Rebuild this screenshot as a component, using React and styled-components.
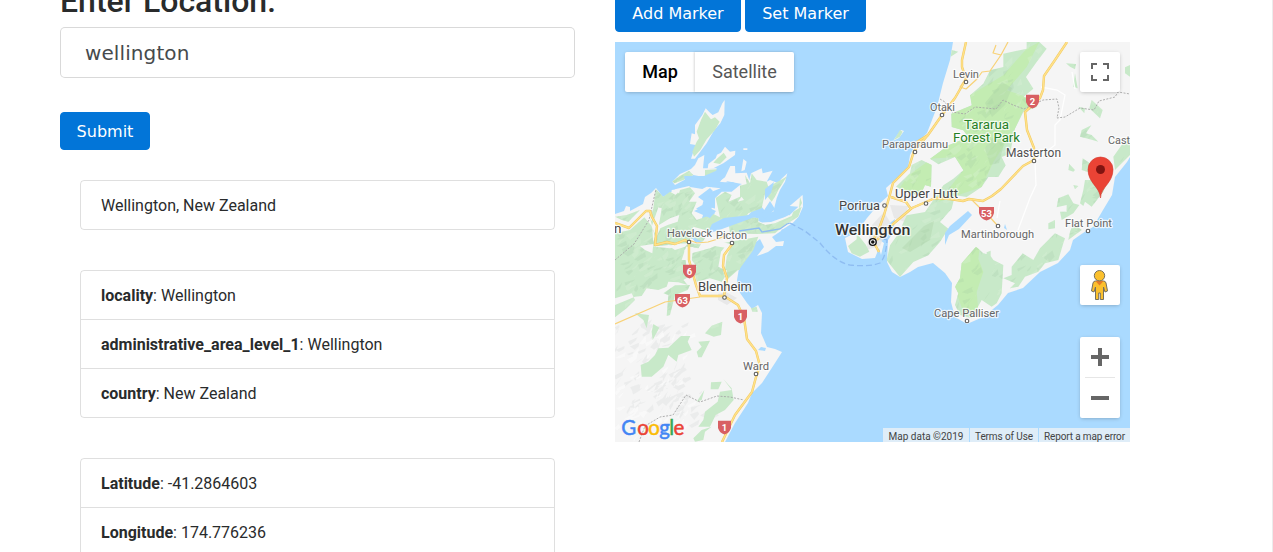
import React from "react";
import styled, { createGlobalStyle } from "styled-components";

const GlobalStyle = createGlobalStyle`
  *, *::before, *::after { box-sizing: border-box; }
  html, body { margin: 0; height: 100%; overflow: hidden; background: #fff; }
  body { font-family: Roboto, "Liberation Sans", sans-serif; font-size: 16px; line-height: 1.5; color: #292b2c; }
`;

const Page = styled.main`
  height: 552px;
  overflow: hidden;
  display: flex;
  gap: 40px;
  padding-left: 60px;
  border-right: 1px solid #ececec;
`;
const Column = styled.section`
  width: 515px;
  flex: none;
`;
const Heading = styled.h2`
  margin: -16px 0 8px;
  font-size: 32px;
  font-weight: 500;
  line-height: 35px;
`;
const Input = styled.input`
  display: block;
  width: 100%;
  height: 51px;
  padding: 12px 24px;
  border: 1px solid rgba(0, 0, 0, 0.15);
  border-radius: 5px;
  outline: 0;
  background: #fff;
  color: #464a4c;
  font: 20px "DejaVu Sans", sans-serif;
  letter-spacing: 0.1px;
`;
const Button = styled.button`
  width: ${(p) => p.$width}px;
  height: 38px;
  padding: 9px 0 7px;
  border: 1px solid #0275d8;
  border-radius: 4px;
  background: #0275d8;
  color: #fff;
  font: 16px/20px "DejaVu Sans", sans-serif;
  white-space: nowrap;
`;
const SubmitRow = styled.div`
  display: flex;
  margin: 34px 0 30px;
`;
const MarkerRow = styled.div`
  display: flex;
  gap: 4px;
  margin: -6px 0 10px;
`;
const Results = styled.div`
  display: flex;
  flex-direction: column;
  gap: 40px;
  padding: 0 20px;
`;
const List = styled.ul`
  margin: 0;
  padding: 0;
  list-style: none;
  border: 1px solid rgba(0, 0, 0, 0.125);
  border-radius: 4px;
`;
const Item = styled.li`
  padding: 13px 20px 11px;
  & + & { border-top: 1px solid rgba(0, 0, 0, 0.125); }
`;
const MapBox = styled.div`
  position: relative;
  width: 515px;
  height: 400px;
  overflow: hidden;
  background: #aadaff;
`;
const MapSvg = styled.svg`
  display: block;
  text { font-family: Roboto, "Liberation Sans", sans-serif; }
`;
const Logo = styled.g`
  && text { font-family: Lato, sans-serif; font-size: 20.5px; }
`;
const Control = styled.div`
  position: absolute;
  right: 10px;
  top: ${(p) => p.$top}px;
  width: 40px;
  height: ${(p) => p.$height || 40}px;
  background: #fff;
  border-radius: 2px;
  box-shadow: 0 1px 4px -1px rgba(0, 0, 0, 0.3);
  svg { display: block; }
`;
const TypeBar = styled.div`
  position: absolute;
  left: 10px;
  top: 10px;
  display: flex;
  height: 40px;
  background: #fff;
  border-radius: 2px;
  box-shadow: 0 1px 4px -1px rgba(0, 0, 0, 0.3);
`;
const TypeTab = styled.div`
  width: ${(p) => p.$width}px;
  text-align: center;
  font-size: 18px;
  line-height: 40px;
  color: ${(p) => (p.$active ? "#000" : "#565656")};
  font-weight: ${(p) => (p.$active ? 500 : 400)};
  & + & { box-shadow: -1px 0 2px rgba(0, 0, 0, 0.15); }
`;
const Legal = styled.div`
  position: absolute;
  right: 0;
  bottom: 0;
  display: flex;
  gap: 1px;
  height: 14px;
`;
const LegalCell = styled.span`
  width: ${(p) => p.$width}px;
  text-align: center;
  white-space: nowrap;
  background: rgba(245, 245, 245, 0.7);
  color: #444;
  font-size: 10px;
  letter-spacing: ${(p) => p.$tracking || 0}px;
  line-height: 17px;
`;

const LAND = [
  "M615 214L624 211L626 206L630 207V211L643 204L645 197L651 193L656 188L663 197L676 189L689 186L700 194L712 187L704 200L694 208L704 212L702 218L712 226L712 232L742 229L755 223L771 222L785 217L789 215L793 221L784 223L781 231L772 237L776 242L784 241L783 246L776 246L768 252L757 256L764 247L760 239L752 245L745 260L739 268L737 280L738 290L747 303L752 309L758 305L762 313L761 333L767 347L775 349L782 352L775 363L762 383L752 393L748 403L735 423L725 442H615Z",
  "M953 42L950 60L943 83L937 107L927 133L915 145L910 155L908 168L895 180L886 188L888 196L878 205L867 218L857 232L845 238L848 252L862 259L875 258L879 248L881 255L884 243L877 238L886 226L895 219L893 233L888 240L887 262L892 272L900 277L910 272L918 267L933 263L945 273L952 283L951 302L955 317L967 324L983 317L998 305L1008 293L1023 288L1040 272L1058 263L1070 250L1073 240L1083 233L1093 227L1103 210L1112 195L1115 177L1127 162L1130 157V42Z",
];
const CROP_A = [
  "M329 30L328 75L316 100L298 120L275 160L240 206H228L242 165L225 162L230 130L240 133V105L262 75L272 55L285 68L293 75L310 67L322 40Z",
  "M330 170L345 185L361 182L360 195L325 220L295 235L278 237L280 222L302 205L306 194L318 188Z",
  "M268 195L264 235L305 235L300 250L270 262L235 255L180 285L172 275L195 252L228 237L240 225L250 205Z",
  "M385 175H397V180H385ZM385 207L395 215L389 240L379 244ZM346 228L360 228L361 250L395 248L403 270L408 250L440 235L443 250L473 242L455 275L465 270L490 280L498 268L517 250L510 275L495 300L485 325L475 365L455 370L440 350L420 355L400 375L372 378L385 390L350 408L290 398L285 380L300 370L300 325L320 305L350 305L375 285L352 276L330 277L312 275L330 262Z",
  "M230 292L262 297L275 290L317 295L290 305L270 315L262 345L245 355L235 372L210 362L170 330L170 300ZM278 267L297 262L290 270Z",
  "M563 315L564 350L551 380L534 398L505 417L460 430L425 430L365 440L290 425L275 400L300 400L310 406L350 400L400 380L430 385L430 392L453 405L480 395L522 377L550 350L524 348Z",
];
const GREEN_A = [
  "M270 65L280 78L288 88L300 82L314 95L300 120L275 148L256 180L237 200L232 185L245 155L252 145L245 125L258 90Z",
  "M326 188L335 202L315 222L295 218L306 206ZM222 242L235 255L205 270L178 280L172 274L195 258ZM270 240L305 238L302 250L270 262Z",
  "M122 297L145 320L165 305L182 315L195 300L225 292L240 310L222 335L245 335L230 370L245 390L295 372L315 382L302 324L330 305L350 315L340 335L375 320L375 287L395 282L390 255L405 280L410 250L425 270L455 275L460 290L515 260L490 300L480 320L470 335L450 310L440 355L400 370L380 400L350 405L290 425L235 410L230 430L270 445L250 475L222 470L160 465L110 470L120 440L105 385L115 355Z",
  "M0 430L45 420L88 382L112 410L115 470L165 475L215 465L200 510L200 540H0ZM0 380L35 375L75 360L40 395L20 390Z",
  "M320 460L430 440L415 480L375 535V540H230V490L285 475Z",
  "M342 408L400 380L430 385L430 396L451 405L480 400L530 378L535 365L560 350L550 380L510 405L480 430L425 432L345 430Z",
];
const GREEN_B = [
  "M0 0H218L225 48L205 60L218 75L190 67L160 65L155 80L130 90L95 85L80 108L60 110L0 135V172L35 145L60 120L50 100L0 115ZM230 0H320L325 35L330 50L320 65L285 55L245 65ZM335 20L345 0H390L375 25L335 60Z",
  "M180 76L225 75L218 90L180 105L165 165L155 168L160 105L145 100ZM60 160L102 165L95 205L85 180ZM115 192L133 203L113 240L110 215ZM408 145L425 140L428 155L412 155Z",
  "M198 228H226L218 245L230 270L190 285L185 305L160 285L145 320L110 350H80L77 315L100 305L120 285L130 265L160 263ZM250 245L285 242L260 292H250L245 275L260 260Z",
  "M270 220L290 197L322 185L318 225L296 230ZM288 367L320 365L310 388H287ZM325 357L350 385L356 420L330 450L302 465L285 500L250 500L265 480L270 455L308 425L315 395L350 390ZM245 425L268 390L260 420ZM235 535L260 510L290 500L270 515L265 540L240 545Z",
];
const GREEN_C = [
  "M300 120L308 125L300 140L282 150ZM320 305L288 290L330 250L335 225L365 210L395 225L393 290L375 285L360 318Z",
  "M144 468L170 448L170 430L198 465L208 485L180 500L155 490Z",
];
const GREEN_D = [
  "M408 70L438 72L435 88L420 80ZM435 100L443 145L430 140ZM485 180L518 210L510 235L478 205ZM484 256L468 280L485 285L505 305L480 298L450 290L455 270ZM585 82L600 75V110L585 100ZM600 290V345L555 390L550 350L575 315ZM458 355L480 370L495 360L485 400L455 390ZM418 372L435 390L430 395L415 390ZM65 30L85 35L62 50ZM445 200L465 205L463 220Z",
];
const GREEN_E = [
  "M138 200L160 220L180 225L190 240L220 255L215 340L200 370L185 380L155 360L125 415L90 405L75 375L85 340L75 320L90 295L95 250ZM170 217L182 212L182 232L170 238Z",
  "M278 220L310 240L330 205L375 160L405 175L400 190L385 240L345 250L325 275L285 290L265 320L240 325L255 310L220 295L245 285L245 260Z",
  "M430 15L445 18L435 28ZM465 0H535L520 35L485 80L465 65L460 78L450 70L460 30ZM415 43L430 70L448 75L430 100L395 120L390 95L410 95L410 75L380 82L385 55ZM355 130L375 120V145L355 148ZM430 130L455 150L415 180L420 155Z",
];
const GREEN_F = [
  "M500 0H538L560 20L530 60L498 105L520 140L490 165L535 175L530 195L490 210L465 260L450 335L425 345L437 370L415 405L385 405L365 435L320 465L285 460L275 500L240 540L265 560L240 600L205 640L160 660L120 705L80 655L90 610L115 575L140 520L195 510L230 460L250 430L280 410L310 385L285 345L235 367L210 350L265 310L325 285L310 265L275 255L273 215L335 190L330 160L370 125L390 85L430 75L430 35L500 20Z",
];
const WOODS = [[GREEN_A, 615, 90], [GREEN_B, 615, 260], [GREEN_C, 800, 90], [GREEN_D, 930, 40], [GREEN_E, 930, 180], [GREEN_F, 860, 42]];

const facets = (() => {
  let seed = 911;
  const rnd = () => {
    seed = (seed * 16807) % 2147483647;
    return seed / 2147483647;
  };
  const make = (n, x, y, w, h) => {
    let d = "";
    for (let i = 0; i < n; i++) {
      const px = x + rnd() * w;
      const py = y + rnd() * h;
      const a = 3 + rnd() * 8;
      const b = 2 + rnd() * 6;
      const c = rnd() * 6 - 2;
      const e = 1 + rnd() * 5;
      d += `M${px.toFixed(1)} ${py.toFixed(1)}l${a.toFixed(1)} ${(-b).toFixed(1)}l${(c - 2).toFixed(1)} ${(b * 0.8).toFixed(1)}l${(-a * 0.6).toFixed(1)} ${e.toFixed(1)}z`;
    }
    return d;
  };
  return {
    dark: make(260, 615, 165, 175, 150) + make(380, 870, 42, 250, 280),
    light: make(200, 615, 170, 170, 160) + make(260, 890, 50, 240, 270),
    ridge: make(75, 612, 325, 70, 90) + make(25, 650, 390, 60, 45),
    glint: make(55, 612, 335, 75, 105),
  };
})();

const Woods = () =>
  WOODS.map(([paths, x, y]) =>
    paths.map((d) => <path key={d} d={d} transform={`translate(${x} ${y}) scale(.33333)`} />)
  );

const ROADS = [
  "M615 223L629 228L646 211H650L652 217L657 226L655 245L667 242L675 244L685 240L689 243V260L696 285L700 296H724L738 305L744 318L747 339L756 351L760 366L756 377L752 392L735 415L722 442",
  "M733 243L724 255L723 266L727 278L724 296",
  "M966 42L962 60V67L966 79L955 98L942 115L928 135L914 151L909 167L893 183L889 198L884 215L880 226L873 241L879 252",
  "M1067 42L1055 60L1044 76L1043 90L1040 98L1025 112L1027 130L1034 148L1034 160L1023 166L1001 189L992 196L983 201L969 199L963 201L950 199L935 198L926 202L912 208L893 224L877 240",
  "M891 197L906 202L911 209M928 135L917 142L915 151",
];
const THIN_ROADS = [
  "M615 324L665 302L700 297",
  "M689 240L697 243L708 242L718 239L731 233",
  "M1008 42L1001 55L993 53L996 45M1001 55L990 71L982 72L977 79L966 89L960 87L966 78",
  "M972 200L979 207L987 214L997 225",
];
const LABELS = [
  ["Levin", 953, 78, 26], ["Otaki", 930, 111, 25], ["Paraparaumu", 882, 148, 66],
  ["Masterton", 1006, 157, 55, 12, "#505050"], ["Upper Hutt", 895, 198, 63, 13, "#464646"],
  ["Porirua", 839, 210, 41, 13, "#464646"], ["Havelock", 667, 237, 45], ["Picton", 716, 239, 31],
  ["Blenheim", 698, 291, 54, 13, "#464646"], ["Ward", 743, 370, 26], ["Martinborough", 961, 238, 73],
  ["Flat Point", 1065, 227, 47], ["Cape Palliser", 934, 317, 65], ["Cast", 1108, 144, 22],
  ["n", 614, 233, 7.5, 13, "#464646"], ["Wellington", 835, 235, 75.5, 15.5, "#333", 500],
  ["Tararua", 964, 129, 45, 12.3, "#268026"], ["Forest Park", 953, 142, 67, 12.3, "#268026"],
];
const TOWNS = [[966, 82], [942, 115], [915, 152], [1034, 161], [926, 203.5], [884.5, 205.5], [689, 242], [732, 243], [724.5, 297.5], [756, 374], [998, 226], [1088, 231], [967, 321]];
const SHIELDS = [["6", 689.5, 271], ["63", 682.5, 300], ["1", 740.5, 316], ["1", 724.5, 427], ["2", 1032.5, 101], ["53", 986.5, 213]];
const LOGO = [["G", 621.3, "#4285f4"], ["o", 637.2, "#ea4335"], ["o", 648.2, "#fbbc05"], ["g", 659.2, "#4285f4"], ["l", 669.3, "#34a853"], ["e", 673.5, "#ea4335"]];

const Terrain = () => (
  <MapSvg width="515" height="400" viewBox="615 42 515 400">
    <defs>
      <clipPath id="woods">{Woods()}</clipPath>
    </defs>
    <g fill="#f5f5f5">
      {LAND.map((d) => <path key={d} d={d} />)}
      <g transform="translate(615 90) scale(.33333)">{CROP_A.map((d) => <path key={d} d={d} />)}</g>
      <path d="M801 195L803 202L801 210H799ZM901 130L904 131L899 138L893 141Z" />
    </g>
    <path d={facets.ridge} fill="#e4e6e6" opacity=".6" />
    <path d={facets.glint} fill="#fbfbfb" opacity=".7" />
    <path d="M718 294L726 292L737 298L727 305L718 300ZM872 225L884 212L890 222L880 246L866 250ZM890 205L908 206L905 222L894 218Z" fill="#e5e5e5" opacity=".8" />
    <g fill="#c8e9c9"><Woods /></g>
    <path d="M800 197L802 203L799 209Z" fill="#c8e9c9" />
    <g clipPath="url(#woods)">
      <g transform="translate(860 42) scale(.33333)" fill="#c3ecb2">
        <path d="M538 0L500 75L440 145L530 175L490 205L465 260L400 360L365 435L235 480L310 385L285 345L210 350L265 310L325 285L275 255V215L335 190L330 160L430 100L500 20ZM305 635L360 610L355 650L370 690L350 750L355 805L310 810L285 740ZM145 400L215 350L215 430L190 465L110 450Z" />
      </g>
      <path d={facets.dark} fill="#97bf9a" opacity=".17" />
      <path d={facets.light} fill="#e1f3dc" opacity=".26" />
      <path d="M985 103L1002 82L1012 88L1005 105L992 117ZM985 148L992 138L1004 144L999 163L990 165ZM924 226L934 221L930 240L910 252L902 248Z" fill="#a8d1a2" opacity=".35" />
    </g>
    <g fill="#f5f5f5" transform="translate(615 90) scale(.33333)">
      <path d="M130 352L140 355L132 405L165 385L193 375L188 395L158 405L136 415L125 440L110 410ZM225 445L260 455L300 450L345 462L340 475L280 465L225 460ZM175 462L220 460L210 470L180 480L165 470ZM95 360L107 370L112 395L98 375ZM182 303L195 300L192 310ZM380 320L387 330L368 335ZM290 353L302 356L298 370H287ZM208 480L235 470L230 510L245 530L215 535ZM75 468L115 462L112 490L90 480ZM330 470L350 465L335 500L330 540L310 530L318 485Z" />
    </g>
    <g fill="#aadaff">
      <path d="M945 233L950 226L968 211L972 215L959 229L949 235L945 245ZM758 350L761 347L766 348L765 351ZM712 224L724 218L742 216L750 215L765 213L744 221L722 229L707 234ZM694 211L705 206L716 211L710 218ZM698 197L710 188L713 191L705 202ZM726 181L742 184L735 187ZM1005 224L1007 230L1004 228ZM690 235L695 238L704 243L695 242ZM761 215L770 201L775 209L765 219Z" />
      <path d="M684 176L704 176L718 170L725 174L720 182L702 179L694 186L686 184ZM765 189L774 182L771 193L765 200Z" />
    </g>
    <g fill="none" stroke="#fff" strokeWidth="1.3" opacity=".9">
      <path d="M1041 87L1057 90L1065 95L1060 120L1055 125V145L1042 155L1035 162L1036 185L1030 198L1018 230M1075 89L1072 72M1000 201L997 218" />
    </g>
    <g fill="none" stroke="#a6a6a6" strokeWidth=".9" strokeDasharray="2 1.4">
      <path d="M615 260L634 244L649 220L656 189" />
      <path d="M940 99L945 102L952 112L965 114L975 107L996 109L1003 100L1013 105L1024 109L1043 100L1057 99L1059 108L1057 118L1065 117L1080 108L1094 110L1099 101L1115 97L1118 92L1130 94" />
      <path d="M639 442L645 426L660 417L673 415L686 395L700 402L717 396L730 397L744 400" />
    </g>
    <g fill="none" stroke="#f1c95f" strokeWidth="2.4" strokeLinejoin="round">{ROADS.map((d) => <path key={d} d={d} />)}</g>
    <g fill="none" stroke="#ffe18a" strokeWidth="1.4" strokeLinejoin="round">{ROADS.map((d) => <path key={d} d={d} />)}</g>
    <g fill="none" stroke="#f8d277" strokeWidth="1.2" strokeLinejoin="round">{THIN_ROADS.map((d) => <path key={d} d={d} />)}</g>
    <g fill="none" stroke="#8fbdf2" strokeWidth="1.3">
      <path d="M739 231L759 228L762 232L780 229L787 224L790 223" />
      <path d="M790 223L805 231L820 243Q835 262 850 265Q870 267 880 263Q886 257 887 240L880 238" strokeDasharray="6 3" />
    </g>
    {SHIELDS.map(([label, x, y]) => (
      <g key={`${label}-${x}-${y}`} transform={`translate(${x} ${y})`}>
        <path d={label.length > 1 ? "M-7.5 -6H7.5V0Q6 6 0 7.5Q-6 6 -7.5 0Z" : "M-6.5 -6.3H6.5V1Q5 6 0 7.5Q-5 6 -6.5 1Z"} fill="#d85f63" />
        <text y="3.5" textAnchor="middle" fontSize="9.5" fontWeight="700" fill="#fff">{label}</text>
      </g>
    ))}
    {LABELS.map(([label, x, y, w, size = 11.3, fill = "#666", weight = 400]) => (
      <text key={label} x={x} y={y} textLength={w} lengthAdjust="spacingAndGlyphs" fontSize={size} fontWeight={weight} fill={fill} stroke="#fff" strokeOpacity=".75" strokeWidth="2.4" strokeLinejoin="round" paintOrder="stroke">{label}</text>
    ))}
    <g fill="#fff" stroke="#5b5b5b" strokeWidth="1.1">{TOWNS.map(([x, y]) => <circle key={`${x}-${y}`} cx={x} cy={y} r="1.8" />)}</g>
    <circle cx="872.8" cy="242" r="3.4" fill="#fff" stroke="#111" strokeWidth="1.4" />
    <circle cx="872.8" cy="242" r="1.8" fill="#111" />
    <path d="M1100.5 198C1100 187 1088 183 1088 169.5A12.5 12.5 0 0 1 1113 169.5C1113 183 1101 187 1100.5 198Z" fill="#ea4335" stroke="#d33b2f" strokeWidth=".6" />
    <circle cx="1100.5" cy="169.5" r="4.5" fill="#811411" />
    <Logo>
      {LOGO.map(([letter, x, color]) => (
        <text key={x} x={x} y="434.5" fill={color} stroke={color} strokeWidth=".5">{letter}</text>
      ))}
    </Logo>
  </MapSvg>
);

const MapPanel = () => (
  <MapBox>
    <Terrain />
    <TypeBar><TypeTab $active $width={70}>Map</TypeTab><TypeTab $width={99}>Satellite</TypeTab></TypeBar>
    <Control $top={10}>
      <svg width="40" height="40" fill="none" stroke="#666" strokeWidth="2"><path d="M17 12H12V17M23 12H28V17M12 23V28H17M28 23V28H23" /></svg>
    </Control>
    <Control $top={223}>
      <svg width="40" height="40" stroke="#75705f" strokeWidth="1" strokeLinejoin="round">
        <path d="M15.5 16H23.5Q25.5 16 26 18L27.5 26L25 27L23.5 22V34.5H20.3V28H18.7V34.5H15.5V22L14 27L11.5 26L13 18Q13.5 16 15.5 16Z" fill="#fbc02d" />
        <path d="M15.5 16L19.5 20.5L23.5 16Z" fill="#e57b28" stroke="none" />
        <circle cx="19.5" cy="10.7" r="5.2" fill="#fbc02d" />
      </svg>
    </Control>
    <Control $top={295} $height={81}>
      <svg width="40" height="81"><path d="M11 20H29M20 11V29M11 61H29" stroke="#666" strokeWidth="4" /><path d="M5 40.5H35" stroke="#e6e6e6" /></svg>
    </Control>
    <Legal>
      <LegalCell $width={86}>Map data ©2019</LegalCell>
      <LegalCell $width={68} $tracking={-0.1}>Terms of Use</LegalCell>
      <LegalCell $width={91} $tracking={-0.15}>Report a map error</LegalCell>
    </Legal>
  </MapBox>
);

const Fields = ({ rows }) => (
  <List>{rows.map(([name, value]) => <Item key={name}><strong>{name}</strong>: {value}</Item>)}</List>
);

export default function App() {
  return (
    <>
      <GlobalStyle />
      <Page>
        <Column>
          <Heading>Enter Location:</Heading>
          <Input defaultValue="wellington" />
          <SubmitRow><Button $width={90}>Submit</Button></SubmitRow>
          <Results>
            <List><Item>Wellington, New Zealand</Item></List>
            <Fields rows={[["locality", "Wellington"], ["administrative_area_level_1", "Wellington"], ["country", "New Zealand"]]} />
            <Fields rows={[["Latitude", "-41.2864603"], ["Longitude", "174.776236"]]} />
          </Results>
        </Column>
        <Column>
          <MarkerRow><Button $width={126}>Add Marker</Button><Button $width={121}>Set Marker</Button></MarkerRow>
          <MapPanel />
        </Column>
      </Page>
    </>
  );
}
